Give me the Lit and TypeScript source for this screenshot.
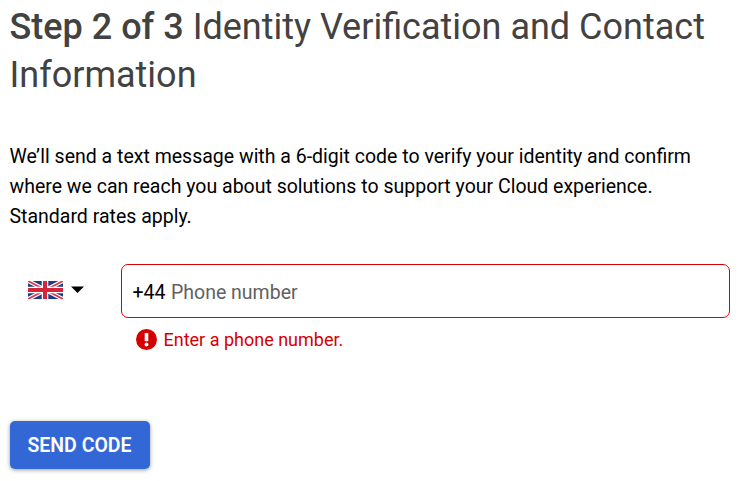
import { LitElement, html, css } from "lit";
import { customElement } from "lit/decorators.js";

@customElement("app-root")
export class AppRoot extends LitElement {
  static styles = css`
    :host { display: block; box-sizing: border-box; width: 748px; height: 481px; overflow: hidden; background: #fff; padding: 3px 18px 0 9.5px; font-family: Roboto, "Liberation Sans", sans-serif; color: #000; }
    h1 { margin: 0; font-size: 36px; line-height: 48px; font-weight: 400; color: #424242; white-space: nowrap; }
    h1 b { font-weight: 500; }
    .intro { margin: 43px 0 0; font-size: 19.5px; line-height: 30px; white-space: nowrap; }
    .row { display: flex; margin: 32px 0 0 0.5px; }
    .country { display: flex; align-items: center; width: 111px; height: 52px; padding-left: 18px; box-sizing: border-box; gap: 8px; }
    .flag, .caret { display: block; }
    .flag { border-bottom: 1px solid #f1f1f1; }
    .caret { margin-bottom: 1px; }
    .entry { flex: 1; }
    .field { box-sizing: border-box; height: 54px; border: 1px solid #d50000; border-radius: 7px; display: flex; align-items: center; padding: 2px 0 0 10.5px; gap: 5.5px; font-size: 19.5px; }
    .hint { color: #616161; }
    .error { display: flex; align-items: center; gap: 6.5px; margin: 10px 0 0 15px; height: 22px; font-size: 18px; color: #d50000; }
    .error svg { display: block; }
    button { display: block; margin: 71px 0 0 0.5px; width: 140px; height: 48px; border: 0; border-radius: 5px; background: #3367d6; color: #fff; font: 600 19.5px Roboto, "Liberation Sans", sans-serif; padding: 1px 1px 0 0; box-shadow: 0 1px 4px rgba(0,0,0,.4); }
  `;

  render() {
    return html`
      <h1><b>Step 2 of 3</b> Identity Verification and Contact<br>Information</h1>
      <p class="intro">We’ll send a text message with a 6-digit code to verify your identity and confirm<br>where we can reach you about solutions to support your Cloud experience.<br>Standard rates apply.</p>
      <div class="row">
        <div class="country">
          <svg class="flag" width="35" height="18" viewBox="0 0 35 18"><rect width="35" height="18" fill="#1f3a85"/><path d="M0 0L35 18M35 0L0 18" stroke="#fff" stroke-width="4.2"/><path d="M0 0L35 18M35 0L0 18" stroke="#dc3b4d" stroke-width="1.8"/><path d="M17 0V18M0 9H35" stroke="#fff" stroke-width="6.6"/><path d="M17 0V18M0 9H35" stroke="#d4253a" stroke-width="4"/></svg>
          <svg class="caret" width="13" height="7" viewBox="0 0 13 7"><path d="M0 .5H13L6.5 7Z"/></svg>
        </div>
        <div class="entry">
          <div class="field"><span>+44</span><span class="hint">Phone number</span></div>
          <div class="error">
            <svg width="21" height="21" viewBox="0 0 21 21"><circle cx="10.5" cy="10.5" r="10.5" fill="#d50000"/><path d="M8.7 4h3.6v8.2H8.7z" fill="#fff"/><circle cx="10.5" cy="15.5" r="1.9" fill="#fff"/></svg>
            <span>Enter a phone number.</span>
          </div>
        </div>
      </div>
      <button>SEND CODE</button>
    `;
  }
}
